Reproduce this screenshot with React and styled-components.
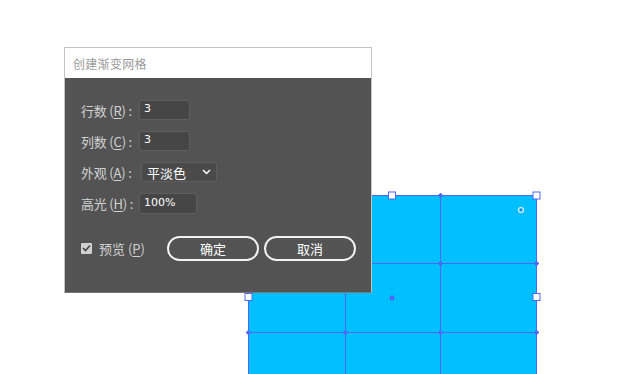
import React from 'react'
import styled, { createGlobalStyle } from 'styled-components'

const GlobalStyle = createGlobalStyle`
    html, body {
        margin: 0;
        padding: 0;
        background: #fff;
    }
    body {
        font-family: 'Noto Sans CJK SC', 'Noto Sans', sans-serif;
    }
`

const Desktop = styled.div`
    position: relative;
    width: 640px;
    height: 374px;
    overflow: hidden;
    background: #fff;
`

const Artwork = styled.svg`
    position: absolute;
    left: 244px;
    top: 191px;
`

const Dialog = styled.div`
    position: absolute;
    left: 64px;
    top: 47px;
    width: 306px;
    height: 244px;
    border: 1px solid #c4c4c4;
    border-bottom-color: #777;
    background: #535353;
    display: flex;
    flex-direction: column;
`

const TitleBar = styled.div`
    height: 30px;
    flex: 0 0 30px;
    background: #fff;
    display: flex;
    align-items: center;
    padding-left: 8px;
    font-size: 12px;
    color: #9a9a9a;
    letter-spacing: 0.3px;
`

const Body = styled.div`
    flex: 1;
    display: flex;
    flex-direction: column;
    padding: 22px 15px 0 16px;
    gap: 11px;
`

const Row = styled.div`
    display: flex;
    align-items: center;
    height: 20px;
`

const Label = styled.label`
    width: 58px;
    flex: 0 0 58px;
    font-size: 13px;
    color: #d2d2d2;
    white-space: nowrap;
    letter-spacing: -0.2px;
    u {
        text-decoration: underline;
        text-underline-offset: 2px;
    }
`

const Field = styled.div`
    box-sizing: border-box;
    width: ${p => p.$w}px;
    height: ${p => p.$h || 20}px;
    background: #464646;
    border: 1px solid #5e5e5e;
    border-radius: 2px;
    color: #fff;
    font-family: 'DejaVu Sans', 'Noto Sans CJK SC', sans-serif;
    font-size: 11px;
    padding: 0 4px;
    display: flex;
    align-items: ${p => p.$top ? 'flex-start' : 'center'};
    line-height: 16px;
`

const Select = styled.div`
    box-sizing: border-box;
    width: 76px;
    height: 20px;
    margin-left: 2px;
    background: #4a4a4a;
    border: 1px solid #5e5e5e;
    border-radius: 2px;
    color: #fff;
    font-size: 13px;
    padding: 0 5px;
    display: flex;
    align-items: center;
    justify-content: space-between;
`

const Footer = styled.div`
    display: flex;
    align-items: center;
    margin-top: 12px;
    height: 24px;
`

const CheckLabel = styled.div`
    display: flex;
    align-items: center;
    gap: 7px;
    width: 86px;
    font-size: 13px;
    color: #d2d2d2;
    u {
        text-underline-offset: 2px;
    }
`

const Box = styled.span`
    width: 11px;
    height: 11px;
    background: #d0d0d0;
    border-radius: 1px;
    display: flex;
    align-items: center;
    justify-content: center;
`

const Button = styled.button`
    box-sizing: border-box;
    width: 92px;
    height: 25px;
    margin-left: ${p => p.$ml || 0}px;
    border: 2px solid #f2f2f2;
    border-radius: 13px;
    background: transparent;
    color: #fff;
    font-family: 'Noto Sans CJK SC', sans-serif;
    font-size: 13px;
    padding: 0;
    cursor: pointer;
`

const LINE = '#4f68f2'

function Handle({ x, y }) {
    return <rect x={x - 3.5} y={y - 3.5} width={7} height={7} fill="#fff" stroke={LINE} strokeWidth={1} />
}

function Point({ x, y }) {
    return <rect x={x - 2} y={y - 2} width={4} height={4} fill={LINE} transform={`rotate(45 ${x} ${y})`} />
}

// mesh artwork, origin at (248,195) in page coords, offset 4px for handles
function Mesh() {
    const o = 4
    const w = 288
    const cols = [0, 97, 192, 288]
    const rows = [0, 68, 137, 205]
    return (
        <Artwork width={300} height={190}>
            <g transform={`translate(${o} ${o})`}>
                <rect x={0} y={0} width={w} height={210} fill="#00bfff" />
                {cols.map(c => <rect key={'c' + c} x={c} y={0} width={1} height={210} fill={LINE} shapeRendering="crispEdges" />)}
                {rows.map(r => <rect key={'r' + r} x={0} y={r} width={w + 1} height={1} fill={LINE} shapeRendering="crispEdges" />)}
                <Point x={192.5} y={0.5} />
                <Point x={192.5} y={68.5} />
                <Point x={288.5} y={68.5} />
                <Point x={288.5} y={137.5} />
                <Point x={0.5} y={137.5} />
                <Point x={97.5} y={137.5} />
                <Point x={192.5} y={137.5} />
                <circle cx={144} cy={103} r={2.5} fill={LINE} />
                <circle cx={273} cy={15} r={2.5} fill="none" stroke="#e8ecff" strokeWidth={1.2} />
                <circle cx={273} cy={15} r={1} fill={LINE} />
                <Handle x={144} y={0.5} />
                <Handle x={288.5} y={0.5} />
                <Handle x={288.5} y={102} />
                <Handle x={0.5} y={102} />
                <Handle x={0.5} y={0.5} />
            </g>
        </Artwork>
    )
}

function App() {
    return (
        <Desktop>
            <GlobalStyle />
            <Mesh />
            <Dialog>
                <TitleBar>创建渐变网格</TitleBar>
                <Body>
                    <Row>
                        <Label>行数 (<u>R</u>) :</Label>
                        <Field $w={51} $top>3</Field>
                    </Row>
                    <Row>
                        <Label>列数 (<u>C</u>) :</Label>
                        <Field $w={51} $top>3</Field>
                    </Row>
                    <Row>
                        <Label>外观 (<u>A</u>) :</Label>
                        <Select>
                            <span>平淡色</span>
                            <svg width="9" height="6" viewBox="0 0 9 6">
                                <path d="M1 1 L4.5 4.5 L8 1" fill="none" stroke="#fff" strokeWidth="1.5" />
                            </svg>
                        </Select>
                    </Row>
                    <Row>
                        <Label>高光 (<u>H</u>) :</Label>
                        <Field $w={58} $h={21}>100%</Field>
                    </Row>
                    <Footer>
                        <CheckLabel>
                            <Box>
                                <svg width="9" height="8" viewBox="0 0 9 8">
                                    <path d="M1 4 L3.5 6.5 L8 1.5" fill="none" stroke="#444" strokeWidth="1.6" />
                                </svg>
                            </Box>
                            <span>预览 (<u>P</u>)</span>
                        </CheckLabel>
                        <Button>确定</Button>
                        <Button $ml={5}>取消</Button>
                    </Footer>
                </Body>
            </Dialog>
        </Desktop>
    )
}

export default App
